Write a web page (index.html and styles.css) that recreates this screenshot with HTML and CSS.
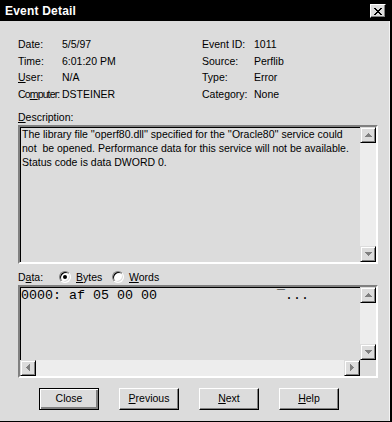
FILE: index.html
```html
<!DOCTYPE html>
<html>
<head>
<meta charset="utf-8">
<link rel="stylesheet" href="styles.css">
</head>
<body>
<div class="window">
  <div class="titlebar">
    <span class="title">Event Detail</span>
    <span class="xbtn"><svg width="10" height="9" viewBox="0 0 10 9"><path d="M1 1 L8 8 M2 1 L9 8 M8 1 L1 8 M9 1 L2 8" stroke="#000" stroke-width="1" fill="none" shape-rendering="crispEdges"/></svg></span>
  </div>
  <div class="content">
    <div class="info">
      <span>Date:</span><span>5/5/97</span><span>Event ID:</span><span>1011</span>
      <span>Time:</span><span>6:01:20 PM</span><span>Source:</span><span>Perflib</span>
      <span><u>U</u>ser:</span><span>N/A</span><span>Type:</span><span>Error</span>
      <span class="tight">Co<u>m</u>puter:</span><span>DSTEINER</span><span>Category:</span><span>None</span>
    </div>
    <div class="label"><u>D</u>escription:</div>
    <div class="box desc">
      <div class="desc-text">The library file ''operf80.dll'' specified for the ''Oracle80'' service could not &nbsp;be opened. Performance data for this service will not be available. Status code is data DWORD 0.</div>
      <div class="vscroll">
        <div class="sbtn"><svg width="7" height="4" viewBox="0 0 7 4"><path d="M3 0h1v1h1v1h1v1h1v1H0V3h1V2h1V1h1z" fill="#808080"/></svg></div>
        <div class="track"></div>
        <div class="sbtn"><svg width="7" height="4" viewBox="0 0 7 4"><path d="M0 0h7v1H6v1H5v1H4v1H3V3H2V2H1V1H0z" fill="#808080"/></svg></div>
      </div>
    </div>
    <div class="data-row">
      <span class="data-lbl">D<u>a</u>ta:</span>
      <span class="radio on"><span class="dot"></span></span><span class="rlbl"><u>B</u>ytes</span>
      <span class="radio"></span><span class="rlbl"><u>W</u>ords</span>
    </div>
    <div class="box data">
      <div class="hex">0000: af 05 00 00               ¯...</div>
      <div class="vscroll">
        <div class="sbtn"><svg width="7" height="4" viewBox="0 0 7 4"><path d="M3 0h1v1h1v1h1v1h1v1H0V3h1V2h1V1h1z" fill="#808080"/></svg></div>
        <div class="track"></div>
        <div class="sbtn"><svg width="7" height="4" viewBox="0 0 7 4"><path d="M0 0h7v1H6v1H5v1H4v1H3V3H2V2H1V1H0z" fill="#808080"/></svg></div>
      </div>
      <div class="hscroll">
        <div class="sbtn"><svg width="4" height="7" viewBox="0 0 4 7"><path d="M3 0h1v7H3V6H2V5H1V4H0V3h1V2h1V1h1z" fill="#808080"/></svg></div>
        <div class="track"></div>
        <div class="sbtn"><svg width="4" height="7" viewBox="0 0 4 7"><path d="M0 0h1v1h1v1h1v1h1v1H3v1H2v1H1v1H0z" fill="#808080"/></svg></div>
      </div>
      <div class="corner"></div>
    </div>
    <div class="buttons">
      <span class="btn default"><span class="btn-in">Close</span></span>
      <span class="btn"><span class="btn-in"><u>P</u>revious</span></span>
      <span class="btn"><span class="btn-in"><u>N</u>ext</span></span>
      <span class="btn"><span class="btn-in"><u>H</u>elp</span></span>
    </div>
  </div>
</div>
</body>
</html>
```
FILE: styles.css
```css
html, body {
  margin: 0;
  padding: 0;
  background: #dcdcdc;
}
body {
  font-family: "Liberation Sans", Arial, sans-serif;
  font-size: 10.5px;
  color: #000;
}
u { text-decoration: underline; text-underline-offset: 1px; }
.window {
  width: 392px;
  height: 422px;
  box-sizing: border-box;
  border-right: 2px solid #000;
  border-bottom: 1px solid #000;
  background: #dcdcdc;
  display: flex;
  flex-direction: column;
  position: relative;
}
.window::after {
  content: "";
  position: absolute;
  right: 0;
  top: 21px;
  bottom: 0;
  width: 1px;
  background: #f4f4f4;
}
.titlebar {
  height: 21px;
  background: #000;
  color: #fff;
  display: flex;
  align-items: center;
  justify-content: space-between;
  padding: 0 4px 0 5px;
}
.title {
  font-weight: bold;
  font-size: 12px;
  letter-spacing: 0.2px;
  margin-top: 1px;
}
.xbtn {
  width: 16px;
  height: 14px;
  box-sizing: border-box;
  background: #dcdcdc;
  border: 1px solid;
  border-color: #fff #000 #000 #fff;
  box-shadow: inset -1px -1px 0 #808080;
  display: flex;
  align-items: center;
  justify-content: center;
  margin-top: 1px;
}
.content {
  padding: 15px 0 0 18px;
}
.info {
  display: grid;
  grid-template-columns: 44px 140px 52px 1fr;
  grid-auto-rows: 16.67px;
  line-height: 16.67px;
  white-space: nowrap;
}
.tight { letter-spacing: -0.85px; }
.label {
  margin-top: 8.33px;
  line-height: 12px;
  height: 12px;
  margin-bottom: 2px;
}
.box {
  width: 360px;
  box-sizing: border-box;
  border: 2px solid;
  border-color: #808080 #fff #fff #808080;
  box-shadow: inset 1px 1px 0 #000;
  display: grid;
  grid-template-columns: 1fr 16px;
  background: #dcdcdc;
}
.desc {
  height: 139px;
}
.desc-text {
  padding: 0 2px 0 2px;
  line-height: 14px;
}
.vscroll {
  display: flex;
  flex-direction: column;
  background: #ededed;
}
.vscroll .track, .hscroll .track {
  flex: 1;
}
.sbtn {
  width: 16px;
  height: 16px;
  box-sizing: border-box;
  background: #dcdcdc;
  border: 1px solid;
  border-color: #dcdcdc #000 #000 #dcdcdc;
  box-shadow: inset 1px 1px 0 #fff, inset -1px -1px 0 #808080;
  display: flex;
  align-items: center;
  justify-content: center;
  flex: none;
}
.data-row {
  margin-top: 7px;
  height: 12px;
  line-height: 12px;
  margin-bottom: 2px;
  display: flex;
  align-items: center;
}
.data-lbl { width: 41px; }
.rlbl { margin-left: 5px; width: 36px; }
.radio {
  width: 12px;
  height: 12px;
  box-sizing: border-box;
  border-radius: 50%;
  background: #fff;
  border: 1px solid;
  border-color: #808080 #fff #fff #808080;
  box-shadow: inset 1px 1px 0 #000, inset -1px -1px 0 #dcdcdc;
  display: flex;
  align-items: center;
  justify-content: center;
}
.dot {
  width: 4px;
  height: 4px;
  border-radius: 50%;
  background: #000;
}
.data {
  height: 93px;
  grid-template-rows: 1fr 16px;
}
.hex {
  font-family: "Liberation Mono", "Courier New", monospace;
  font-size: 13.33px;
  line-height: 15px;
  white-space: pre;
  padding: 1px 0 0 1px;
  overflow: hidden;
}
.hscroll {
  display: flex;
  background: #ededed;
}
.corner { background: #dcdcdc; }
.buttons {
  margin-top: 10px;
  padding-left: 21px;
  display: flex;
  gap: 20px;
}
.btn {
  width: 60px;
  height: 22px;
  box-sizing: border-box;
  border: 1px solid;
  border-color: #fff #000 #000 #fff;
  box-shadow: inset -1px -1px 0 #808080;
  display: flex;
}
.btn.default {
  border: 1px solid #000;
  box-shadow: inset 1px 1px 0 #fff, inset -2px -2px 0 #808080;
}
.btn-in {
  flex: 1;
  display: flex;
  align-items: center;
  justify-content: center;
  padding-bottom: 1px;
}
```
